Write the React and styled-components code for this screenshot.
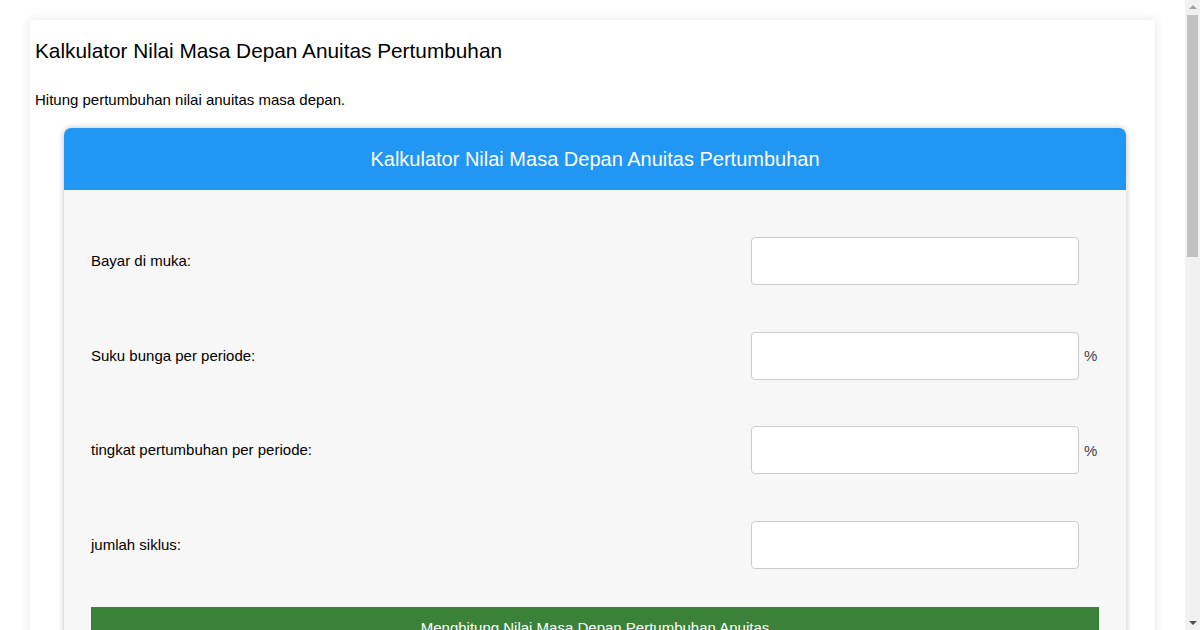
import React from 'react';
import styled, { createGlobalStyle } from 'styled-components';

const GlobalStyle = createGlobalStyle`
    html, body {
        margin: 0;
        padding: 0;
        background: #ffffff;
        font-family: "Liberation Sans", Arial, sans-serif;
        color: #000;
    }
`;

const Page = styled.div`
    box-sizing: border-box;
    min-height: 1470px;
    padding: 20px 45px 60px 30px;
`;

// the browser's scroll bar, drawn over the right edge
const ScrollBar = styled.div`
    position: fixed;
    top: 0;
    right: 0;
    width: 15px;
    height: 100vh;
    background: #f1f1f1;
    display: flex;
    flex-direction: column;
    align-items: center;
`;

const Arrow = styled.div`
    width: 0;
    height: 0;
    margin: ${p => (p.down ? 'auto 0 5px' : '5px 0 0')};
    border-left: 4px solid transparent;
    border-right: 4px solid transparent;
    ${p => (p.down ? 'border-top: 4px solid #505050;' : 'border-bottom: 4px solid #a3a3a3;')}
`;

const Thumb = styled.div`
    width: 11px;
    height: 242px;
    margin-top: 6px;
    background: #c1c1c1;
`;

const OuterCard = styled.div`
    background: #ffffff;
    padding: 5px 5px 40px 5px;
    box-shadow: 0 0 10px rgb(0 0 0 / 10%);
`;

const Title = styled.h2`
    margin: 14px 0 0;
    font-size: 20.8px;
    font-weight: normal;
    line-height: 24px;
`;

const Subtitle = styled.p`
    margin: 28px 0 0;
    font-size: 15px;
    line-height: 17px;
`;

const CalcCard = styled.div`
    margin: 20px 0 0 29px;
    width: 1062px;
    border-radius: 7px 7px 0 0;
    background: #f7f7f7;
    box-shadow: 0 0 6px rgb(0 0 0 / 25%);
    overflow: hidden;
`;

const CalcHeader = styled.div`
    height: 62px;
    background: #2196f3;
    color: #ffffff;
    font-size: 20px;
    display: flex;
    align-items: center;
    justify-content: center;
`;

const CalcBody = styled.div`
    padding: 24px 27px 40px;
`;

const Row = styled.div`
    display: grid;
    grid-template-columns: 1fr 328px 20px;
    align-items: center;
    height: 94.5px;
`;

const Label = styled.label`
    font-size: 15px;
    padding-bottom: 1px;
`;

const Input = styled.input`
    box-sizing: border-box;
    width: 328px;
    height: 48px;
    border: 1px solid #cccccc;
    border-radius: 4px;
    background: #ffffff;
    outline: none;
`;

const Unit = styled.span`
    font-size: 15px;
    color: #444;
    padding-left: 5px;
`;

const SubmitButton = styled.button`
    display: block;
    width: 100%;
    margin-top: 15px;
    height: 44px;
    border: none;
    background: #3b8139;
    color: #ffffff;
    font-family: "Liberation Sans", Arial, sans-serif;
    font-size: 15px;
    padding: 0 0 4px;
`;

const fields = [
    { label: 'Bayar di muka:', unit: '' },
    { label: 'Suku bunga per periode:', unit: '%' },
    { label: 'tingkat pertumbuhan per periode:', unit: '%' },
    { label: 'jumlah siklus:', unit: '' },
];

const App = () => (
    <Page>
        <GlobalStyle />
        <OuterCard>
            <Title>Kalkulator Nilai Masa Depan Anuitas Pertumbuhan</Title>
            <Subtitle>Hitung pertumbuhan nilai anuitas masa depan.</Subtitle>
            <CalcCard>
                <CalcHeader>Kalkulator Nilai Masa Depan Anuitas Pertumbuhan</CalcHeader>
                <CalcBody>
                    {fields.map((f) => (
                        <Row key={f.label}>
                            <Label>{f.label}</Label>
                            <Input type="text" />
                            <Unit>{f.unit}</Unit>
                        </Row>
                    ))}
                    <SubmitButton>Menghitung Nilai Masa Depan Pertumbuhan Anuitas</SubmitButton>
                </CalcBody>
            </CalcCard>
        </OuterCard>
        <ScrollBar>
            <Arrow />
            <Thumb />
            <Arrow down />
        </ScrollBar>
    </Page>
);

export default App;
